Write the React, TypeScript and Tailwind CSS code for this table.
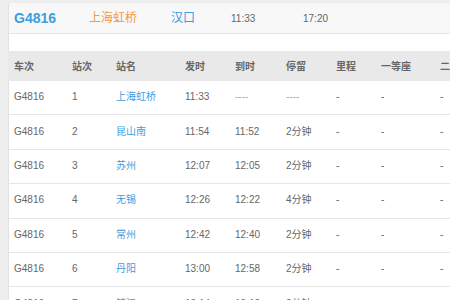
const COLS = "grid grid-cols-[58px_44px_69px_50px_51px_50px_45px_59px_60px]";

const HEAD = ["车次", "站次", "站名", "发时", "到时", "停留", "里程", "一等座", "二等座"];

type Stop = { no: number; name: string; dep: string; arr: string; stay: string };

const STOPS: Stop[] = [
  { no: 1, name: "上海虹桥", dep: "11:33", arr: "----", stay: "----" },
  { no: 2, name: "昆山南", dep: "11:54", arr: "11:52", stay: "2分钟" },
  { no: 3, name: "苏州", dep: "12:07", arr: "12:05", stay: "2分钟" },
  { no: 4, name: "无锡", dep: "12:26", arr: "12:22", stay: "4分钟" },
  { no: 5, name: "常州", dep: "12:42", arr: "12:40", stay: "2分钟" },
  { no: 6, name: "丹阳", dep: "13:00", arr: "12:58", stay: "2分钟" },
  { no: 7, name: "镇江", dep: "13:14", arr: "13:12", stay: "2分钟" },
];

function Cell({ children, className = "" }: { children: React.ReactNode; className?: string }) {
  return <div className={`pl-[6px] whitespace-nowrap overflow-hidden ${className}`}>{children}</div>;
}

export default function App() {
  return (
    <div
      className="w-[450px] h-[300px] overflow-hidden bg-[#eeeeee] pt-[3px] pl-[8px] text-[10px] text-[#666666]"
      style={{ fontFamily: '"Liberation Sans", Arial, "Noto Sans CJK SC", sans-serif' }}
    >
      <div className="h-full bg-white border-l border-[#e2e2e2]">
        {/* train summary */}
        <div className="h-[31px] flex items-center bg-[#f8f8f8] border-b border-[#e6e6e6] pl-[5px]">
          <div className="w-[75px] text-[14px] font-bold text-[#3d9de0]">G4816</div>
          <div className="w-[82px] text-[12px] text-[#f39a3e]">上海虹桥</div>
          <div className="w-[60px] text-[12px] text-[#3d9de0]">汉口</div>
          <div className="w-[72px] text-[10px] text-[#666666]">11:33</div>
          <div className="text-[10px] text-[#666666]">17:20</div>
        </div>

        <div className="h-[17px]" />

        {/* table head */}
        <div className={`${COLS} h-[30px] items-center bg-[#e9e9e9] font-bold text-[#666666] -ml-px`}>
          {HEAD.map((h) => (
            <Cell key={h}>{h}</Cell>
          ))}
        </div>

        {/* stops */}
        {STOPS.map((s) => (
          <div key={s.no} className={`${COLS} h-[34.4px] items-center border-b border-[#e6e6e6] pb-[2px] -ml-px`}>
            <Cell>G4816</Cell>
            <Cell>{s.no}</Cell>
            <Cell className="text-[#3d9de0]">{s.name}</Cell>
            <Cell>{s.dep}</Cell>
            <Cell className={s.arr === "----" ? "text-[#aaaaaa]" : ""}>{s.arr}</Cell>
            <Cell className={s.stay === "----" ? "text-[#aaaaaa]" : ""}>{s.stay}</Cell>
            <Cell>-</Cell>
            <Cell>-</Cell>
            <Cell>-</Cell>
          </div>
        ))}
      </div>
    </div>
  );
}
